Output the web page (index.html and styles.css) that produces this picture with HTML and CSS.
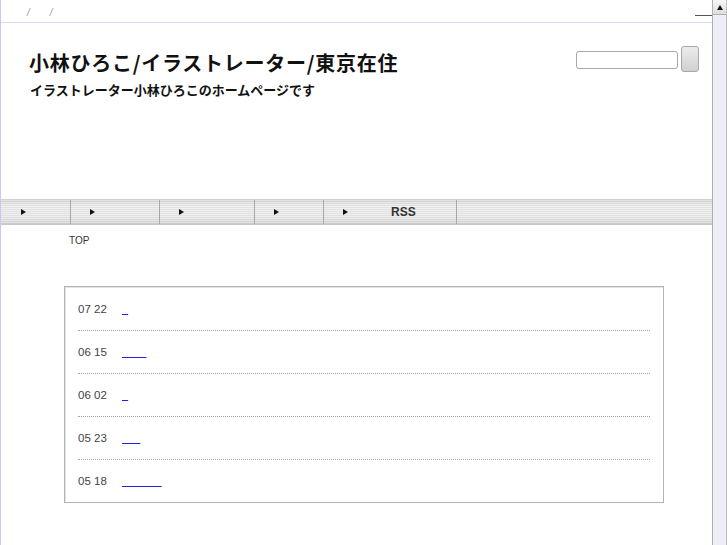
FILE: index.html
```html
<!DOCTYPE html>
<html lang="ja">
<head>
<meta charset="utf-8">
<title>小林ひろこ/イラストレーター/東京在住</title>
<link rel="stylesheet" href="styles.css">
</head>
<body>
<div class="frame">
  <div class="page">
    <div class="topbar">
      <span class="crumb">/</span><span class="crumb">/</span>
      <span class="topline"></span>
    </div>
    <header class="header">
      <div class="titles">
        <h1 class="title">小林ひろこ/イラストレーター/東京在住</h1>
        <p class="subtitle">イラストレーター小林ひろこのホームページです</p>
      </div>
      <form class="search">
        <input class="search-input" type="text">
        <button class="search-btn" type="button"></button>
      </form>
    </header>
    <nav class="nav">
      <a class="nav-item w1"><span class="tri"></span></a>
      <a class="nav-item w2"><span class="tri"></span></a>
      <a class="nav-item w3"><span class="tri"></span></a>
      <a class="nav-item w4"><span class="tri"></span></a>
      <a class="nav-item w5"><span class="tri"></span><span class="rss">RSS</span></a>
    </nav>
    <div class="crumbs2">TOP</div>
    <div class="news">
      <div class="row"><span class="date">07 22</span><a class="link" href="#">&nbsp;&nbsp;</a></div>
      <div class="row"><span class="date">06 15</span><a class="link" href="#">&nbsp;&nbsp;&nbsp;&nbsp;&nbsp;&nbsp;&nbsp;&nbsp;</a></div>
      <div class="row"><span class="date">06 02</span><a class="link" href="#">&nbsp;&nbsp;</a></div>
      <div class="row"><span class="date">05 23</span><a class="link" href="#">&nbsp;&nbsp;&nbsp;&nbsp;&nbsp;&nbsp;</a></div>
      <div class="row"><span class="date">05 18</span><a class="link" href="#">&nbsp;&nbsp;&nbsp;&nbsp;&nbsp;&nbsp;&nbsp;&nbsp;&nbsp;&nbsp;&nbsp;&nbsp;&nbsp;</a></div>
    </div>
  </div>
  <div class="scroll">
    <div class="scroll-up"></div>
  </div>
</div>
</body>
</html>
```
FILE: styles.css
```css
* { box-sizing: border-box; }
html, body { margin: 0; padding: 0; height: 100%; }
body {
  font-family: "Liberation Sans", "Noto Sans CJK JP", sans-serif;
  color: #444;
  background: #fff;
  overflow: hidden;
}
.frame {
  display: flex;
  height: 545px;
}
.page {
  flex: 1;
  border-left: 1px solid #c8c8f4;
  min-width: 0;
}
.topbar {
  position: relative;
  height: 23px;
  border-bottom: 1px solid #d8d8f8;
  font-size: 10px;
  color: #999;
  padding: 7px 0 0 26px;
  line-height: 12px;
}
.crumb { display: inline-block; margin-right: 20px; font-style: italic; }
.topline {
  position: absolute;
  right: 0;
  top: 15px;
  width: 17px;
  height: 1px;
  background: #555;
}
.header {
  height: 176px;
  display: flex;
  justify-content: space-between;
  align-items: flex-start;
}
.titles { padding: 28px 0 0 28px; }
.title {
  margin: 0;
  font-family: "Noto Sans CJK JP", sans-serif;
  font-size: 20px;
  line-height: 24px;
  font-weight: bold;
  color: #111;
  letter-spacing: 0.75px;
}
.subtitle {
  margin: 7px 0 0 1px;
  font-family: "Noto Sans CJK JP", sans-serif;
  font-size: 13px;
  line-height: 16px;
  font-weight: bold;
  color: #111;
}
.search {
  display: flex;
  align-items: flex-start;
  gap: 3px;
  padding: 23px 13px 0 0;
  margin: 0;
}
.search-input {
  margin: 5px 0 0;
  width: 102px;
  height: 18px;
  border: 1px solid #a8a8a8;
  border-radius: 3px;
  background: #fff;
  padding: 0;
}
.search-btn {
  width: 18px;
  height: 26px;
  border: 1px solid #a8a8a8;
  border-radius: 3px;
  background: linear-gradient(#ececec, #d0d0d0);
  padding: 0;
}
.nav {
  display: flex;
  height: 26px;
  border-top: 1px solid #d0d0d0;
  border-bottom: 1px solid #c8c8c8;
  background:
    repeating-linear-gradient(to bottom, rgba(255,255,255,0.35) 0 1px, rgba(0,0,0,0.02) 1px 2px),
    linear-gradient(to bottom, #d2d2d2 0%, #e8e8e8 25%, #e6e6e6 70%, #cfcfcf 100%);
}
.nav-item {
  display: flex;
  align-items: center;
  padding-left: 19px;
  border-right: 1px solid #a8a8a8;
  height: 100%;
}
.w1 { width: 70px; padding-left: 20px; }
.w2 { width: 89px; }
.w3 { width: 95px; }
.w4 { width: 69px; }
.w5 { width: 133px; }
.tri {
  width: 0;
  height: 0;
  border-top: 3px solid transparent;
  border-bottom: 3px solid transparent;
  border-left: 5px solid #111;
}
.rss {
  margin-left: 43px;
  font-size: 12px;
  font-weight: bold;
  color: #333;
}
.crumbs2 {
  font-size: 10px;
  line-height: 12px;
  color: #333;
  padding: 10px 0 0 68px;
  height: 61px;
}
.news {
  margin-left: 63px;
  width: 600px;
  border: 1px solid #b4b4b4;
  box-shadow: inset 1px 1px 0 #e4e4e4;
  padding: 1px 13px 0 13px;
}
.row {
  display: flex;
  align-items: center;
  height: 43px;
  border-bottom: 1px dotted #a0a0a0;
  font-size: 11px;
}
.row:last-child { border-bottom: none; height: 42px; }
.date { width: 44px; color: #444; font-size: 11.5px; }
.link { color: #2222dd; text-decoration: underline; font-size: 11px; }
.scroll {
  width: 15px;
  background: #eeeef8;
  border-left: 1px solid #b0b0b0;
  border-right: 1px solid #c0c0c0;
}
.scroll-up {
  height: 15px;
  border-bottom: 1px solid #b0b0b0;
  background: linear-gradient(#f6f6f6, #dedede);
  display: flex;
  align-items: center;
  justify-content: center;
}
.scroll-up::before {
  content: "";
  border-left: 3px solid transparent;
  border-right: 3px solid transparent;
  border-bottom: 5px solid #111;
}
```
